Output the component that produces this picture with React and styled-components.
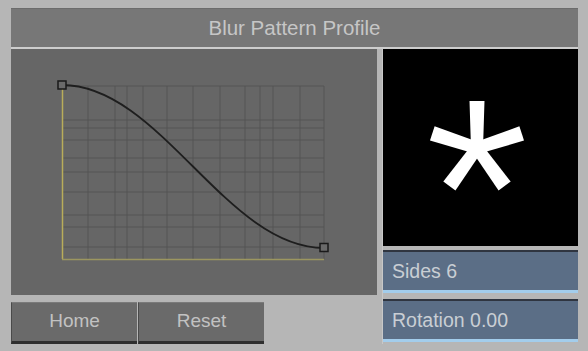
import React from 'react';
import styled, { createGlobalStyle } from 'styled-components';

const GlobalStyle = createGlobalStyle`
  html, body {
    margin: 0;
    padding: 0;
    background: #b6b6b6;
  }
  body {
    font-family: "Liberation Sans", Arial, sans-serif;
  }
`;

const Page = styled.div`
  width: 588px;
  height: 351px;
  box-sizing: border-box;
  padding: 8px 10px 0 11px;
  background: #b6b6b6;
`;

const TitleBar = styled.div`
  height: 38px;
  background: #777777;
  border-top: 1px solid #6c6c6c;
  box-sizing: border-box;
  display: flex;
  align-items: center;
  justify-content: center;
  color: #c6c6c6;
  font-size: 20.5px;
  border-bottom: 2px solid #cdcdcd;
  height: 41px;
`;

const Body = styled.div`
  display: grid;
  grid-template-columns: 366px 195px;
  column-gap: 6px;
  margin-top: 0;
`;

const LeftColumn = styled.div`
  display: flex;
  flex-direction: column;
`;

const RightColumn = styled.div`
  display: flex;
  flex-direction: column;
  border-left: 1px solid #c8c8c8;
  margin-left: -1px;
`;

const GraphPanel = styled.div`
  height: 246px;
  background: #666666;
`;

const ButtonRow = styled.div`
  display: flex;
  margin-top: 7px;
`;

const Button = styled.button`
  width: ${p => p.width}px;
  height: 42px;
  margin: 0 1px 0 0;
  padding: 0 0 2px;
  background: #6a6a6a;
  border: none;
  border-top: 1px solid #7a7a7a;
  border-left: 1px solid #4a4a4a;
  border-bottom: 3px solid #2f2f2f;
  color: #c2c2c2;
  font-family: "Liberation Sans", Arial, sans-serif;
  font-size: 19px;
  box-sizing: border-box;
`;

const Preview = styled.div`
  height: 197px;
  background: #000000;
  display: flex;
  align-items: center;
  justify-content: center;
`;

const Field = styled.div`
  height: 43px;
  margin-top: ${p => p.gap}px;
  box-sizing: border-box;
  background: #5b6e86;
  border-top: 2px solid #2f3540;
  border-bottom: 3px solid #a3cdec;
  color: #c9ced4;
  font-size: 19.5px;
  display: flex;
  align-items: center;
  padding-left: 9px;
`;

const vLines = [88, 115, 127, 143, 167, 193, 220, 245, 260, 273, 300, 324];
const hLines = [86, 120, 128, 140, 158, 172, 192, 215, 227, 247];

function Graph() {
  return (
    <svg width="366" height="246" viewBox="11 49 366 246" style={{ display: 'block' }}>
      {vLines.map(x => (
        <line key={'v' + x} x1={x} y1={86} x2={x} y2={259} stroke="#545454" strokeWidth="1" />
      ))}
      {hLines.map(y => (
        <line key={'h' + y} x1={62} y1={y} x2={324} y2={y} stroke="#545454" strokeWidth="1" />
      ))}
      <line x1="62.5" y1="88" x2="62.5" y2="259" stroke="#b9ad5a" strokeWidth="1.5" />
      <line x1="62" y1="259.5" x2="324" y2="259.5" stroke="#9c9660" strokeWidth="1.5" />
      <path d="M62,85 C160,85 226,248 324,248" fill="none" stroke="#1e1e1e" strokeWidth="1.8" />
      <rect x="58" y="81" width="8" height="8" fill="#6a6a6a" stroke="#1a1a1a" strokeWidth="1.5" />
      <rect x="320" y="243.5" width="8" height="8" fill="#6a6a6a" stroke="#1a1a1a" strokeWidth="1.5" />
    </svg>
  );
}

function Asterisk() {
  const cx = 477 - 383;
  const cy = 148 - 49;
  const arms = [0, 72, 144, 216, 288];
  return (
    <svg width="195" height="197" viewBox="0 0 195 197" style={{ display: 'block' }}>
      {arms.map(a => (
        <polygon
          key={a}
          points="-6,0 6,0 7.5,-47 -7.5,-47"
          fill="#ffffff"
          transform={`translate(${cx} ${cy}) rotate(${a})`}
        />
      ))}
    </svg>
  );
}

export default function App() {
  return (
    <Page>
      <GlobalStyle />
      <TitleBar>Blur Pattern Profile</TitleBar>
      <Body>
        <LeftColumn>
          <GraphPanel>
            <Graph />
          </GraphPanel>
          <ButtonRow>
            <Button width={126}>Home</Button>
            <Button width={126}>Reset</Button>
          </ButtonRow>
        </LeftColumn>
        <RightColumn>
          <Preview>
            <Asterisk />
          </Preview>
          <Field gap={4}>Sides 6</Field>
          <Field gap={6}>Rotation 0.00</Field>
        </RightColumn>
      </Body>
    </Page>
  );
}
